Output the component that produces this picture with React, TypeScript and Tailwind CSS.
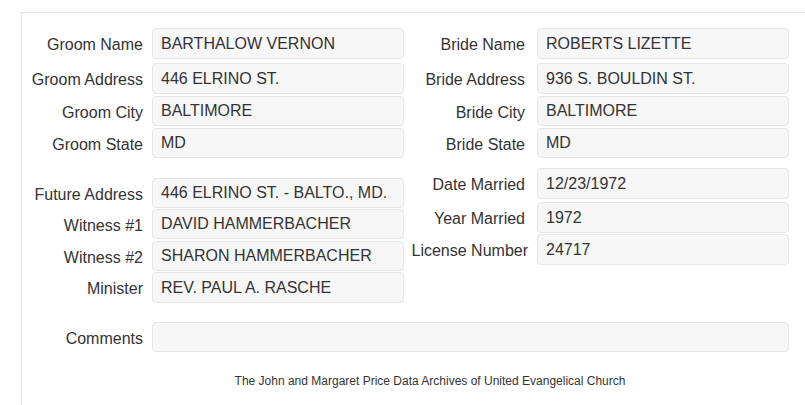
const font = { fontFamily: '"Liberation Sans", Arial, Helvetica, sans-serif' };

type Field = { label: string; value: string; mt: string; h: string; labelShift?: string };

const section1Left: Field[] = [
  { label: "Groom Name", value: "BARTHALOW VERNON", mt: "mt-0", h: "h-[31px]" },
  { label: "Groom Address", value: "446 ELRINO ST.", mt: "mt-[4px]", h: "h-[31px]" },
  { label: "Groom City", value: "BALTIMORE", mt: "mt-[2px]", h: "h-[30px]" },
  { label: "Groom State", value: "MD", mt: "mt-[2px]", h: "h-[30px]" },
];

const section1Right: Field[] = [
  { label: "Bride Name", value: "ROBERTS LIZETTE", mt: "mt-0", h: "h-[31px]" },
  { label: "Bride Address", value: "936 S. BOULDIN ST.", mt: "mt-[4px]", h: "h-[31px]" },
  { label: "Bride City", value: "BALTIMORE", mt: "mt-[2px]", h: "h-[30px]" },
  { label: "Bride State", value: "MD", mt: "mt-[2px]", h: "h-[30px]" },
];

const section2Left: Field[] = [
  { label: "Future Address", value: "446 ELRINO ST. - BALTO., MD.", mt: "mt-0", h: "h-[30px]" },
  { label: "Witness #1", value: "DAVID HAMMERBACHER", mt: "mt-[1px]", h: "h-[30px]" },
  { label: "Witness #2", value: "SHARON HAMMERBACHER", mt: "mt-[2px]", h: "h-[30px]" },
  { label: "Minister", value: "REV. PAUL A. RASCHE", mt: "mt-[1px]", h: "h-[31px]" },
];

const section2Right: Field[] = [
  { label: "Date Married", value: "12/23/1972", mt: "mt-0", h: "h-[31px]" },
  { label: "Year Married", value: "1972", mt: "mt-[3px]", h: "h-[31px]" },
  { label: "License Number", value: "24717", mt: "mt-[1px]", h: "h-[31px]", labelShift: "translate-x-[3px]" },
];

function Row({ f, right }: { f: Field; right?: boolean }) {
  return (
    <div className={`flex items-center ${f.mt}`}>
      <div
        className={`w-[121px] shrink-0 whitespace-nowrap pt-[3px] text-right text-[16px] text-[#333] ${
          right ? "mr-[12px]" : "mr-[9px]"
        } ${f.labelShift ?? ""}`}
      >
        {f.label}
      </div>
      <div
        className={`flex w-[252px] items-center rounded-[4px] border border-[#e6e6e6] bg-[#f7f7f7] pl-[8px] text-[16px] text-[#333] ${f.h}`}
      >
        {f.value}
      </div>
    </div>
  );
}

export default function App() {
  return (
    <div className="min-h-[405px] bg-white" style={font}>
      <div className="ml-[21px] mt-[12px] border-l border-t border-[#e3e3e3] pt-[15px] pb-[24px]">
        <div className="flex">
          <div className="w-[382px]">
            {section1Left.map((f) => (
              <Row key={f.label} f={f} />
            ))}
          </div>
          <div>
            {section1Right.map((f) => (
              <Row key={f.label} f={f} right />
            ))}
          </div>
        </div>
        <div className="flex items-start">
          <div className="mt-[20px] w-[382px]">
            {section2Left.map((f) => (
              <Row key={f.label} f={f} />
            ))}
          </div>
          <div className="mt-[10px]">
            {section2Right.map((f) => (
              <Row key={f.label} f={f} right />
            ))}
          </div>
        </div>
        <div className="mt-[19px] flex items-center">
          <div className="mr-[9px] w-[121px] shrink-0 pt-[3px] text-right text-[16px] text-[#333]">
            Comments
          </div>
          <div className="h-[30px] w-[637px] rounded-[4px] border border-[#e6e6e6] bg-[#f7f7f7]" />
        </div>
        <div className="mt-[22px] pl-[33px] text-center text-[12px] leading-[14px] text-[#333]">
          The John and Margaret Price Data Archives of United Evangelical Church
        </div>
      </div>
    </div>
  );
}
